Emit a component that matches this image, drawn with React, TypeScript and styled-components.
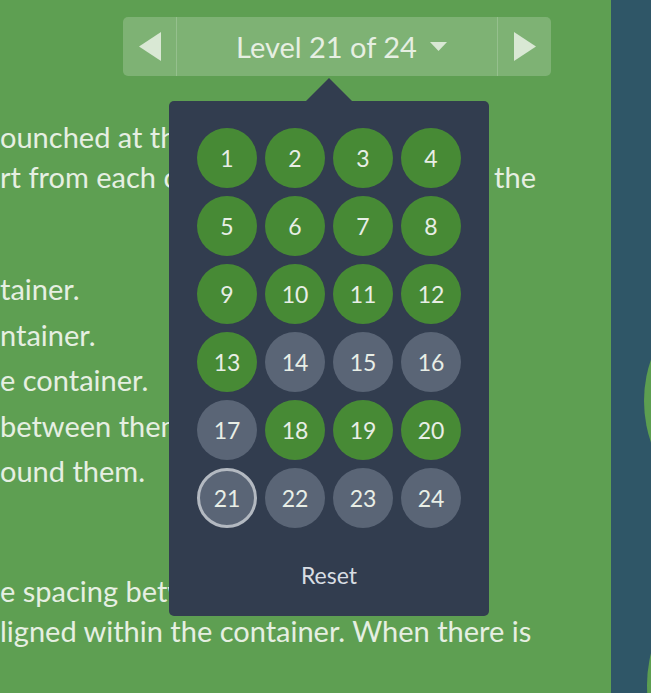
import styled, { createGlobalStyle, css } from "styled-components";

const GlobalStyle = createGlobalStyle`
  html, body {
    margin: 0;
    padding: 0;
    overflow: hidden;
  }
  body {
    font-family: Lato, "Open Sans", sans-serif;
    background: #5e9f52;
  }
`;

const Page = styled.div`
  display: flex;
  width: 651px;
  height: 693px;
  overflow: hidden;
`;

const Instructions = styled.div`
  width: 611px;
  flex-shrink: 0;
  background: #5e9f52;
  color: #e6efe2;
  overflow: hidden;
`;

const LevelBar = styled.div`
  position: relative;
  margin: 17px 0 0 123px;
  width: 428px;
`;

const NavBox = styled.div`
  display: flex;
  height: 59px;
  border-radius: 5px;
  background: rgba(255, 255, 255, 0.2);
`;

const ArrowButton = styled.div<{ $side: "left" | "right" }>`
  width: 53px;
  display: flex;
  align-items: center;
  justify-content: center;
  ${(p) =>
    p.$side === "left"
      ? css`border-right: 1px solid rgba(255, 255, 255, 0.18);`
      : css`border-left: 1px solid rgba(255, 255, 255, 0.18);`}
`;

const LevelLabel = styled.div`
  flex: 1;
  display: flex;
  align-items: center;
  justify-content: center;
  gap: 13px;
  font-size: 29px;
  color: #e6efe2;
  padding-left: 9px;
`;

const Dropdown = styled.div`
  position: absolute;
  top: 84px;
  left: 46px;
  width: 320px;
  background: #323d4f;
  border-radius: 5px;
  padding: 27px 28px 24px;
  box-sizing: border-box;
  z-index: 2;

  &::before {
    content: "";
    position: absolute;
    top: -23px;
    left: 50%;
    margin-left: -23px;
    border-left: 23px solid transparent;
    border-right: 23px solid transparent;
    border-bottom: 23px solid #323d4f;
  }
`;

const LevelGrid = styled.div`
  display: grid;
  grid-template-columns: repeat(4, 60px);
  gap: 8px;
`;

const LevelDot = styled.div<{ $solved: boolean; $current: boolean }>`
  width: 60px;
  height: 60px;
  box-sizing: border-box;
  border-radius: 50%;
  display: flex;
  align-items: center;
  justify-content: center;
  font-size: 23px;
  color: #e8eee6;
  background: ${(p) => (p.$solved ? "#478a35" : "#5a6576")};
  border: ${(p) => (p.$current ? "3px solid #b3b9c1" : "none")};
`;

const Reset = styled.div`
  margin-top: 30px;
  line-height: 34px;
  text-align: center;
  font-size: 23px;
  color: #d8dde3;
`;

const Text = styled.div`
  font-size: 29px;
  white-space: nowrap;
`;

const Paragraph = styled.div<{ $top: number }>`
  margin-top: ${(p) => p.$top}px;
  line-height: 40px;
`;

const SplitLine = styled.div`
  display: flex;
  justify-content: space-between;
  width: 536px;
`;

const List = styled.div`
  margin-top: 69px;
  line-height: 45.5px;
`;

const Board = styled.div`
  position: relative;
  flex: 1;
  background: #2f5667;
  overflow: hidden;
`;

const LilyPad = styled.div<{ $left: number; $top: number }>`
  position: absolute;
  left: ${(p) => p.$left}px;
  top: ${(p) => p.$top}px;
  width: 254px;
  height: 254px;
  border-radius: 50%;
  background: #5c9e50;
`;

const solved = new Set([1, 2, 3, 4, 5, 6, 7, 8, 9, 10, 11, 12, 13, 18, 19, 20]);
const levels = Array.from({ length: 24 }, (_, i) => i + 1);

export default function App() {
  return (
    <>
      <GlobalStyle />
      <Page>
        <Instructions>
          <LevelBar>
            <NavBox>
              <ArrowButton $side="left">
                <svg width="22" height="29" viewBox="0 0 22 29">
                  <polygon points="22,0 22,29 0,14.5" fill="#d9e8d4" />
                </svg>
              </ArrowButton>
              <LevelLabel>
                Level 21 of 24
                <svg width="17" height="9" viewBox="0 0 17 9">
                  <polygon points="0,0 17,0 8.5,9" fill="#d9e8d4" />
                </svg>
              </LevelLabel>
              <ArrowButton $side="right">
                <svg width="22" height="29" viewBox="0 0 22 29">
                  <polygon points="0,0 0,29 22,14.5" fill="#d9e8d4" />
                </svg>
              </ArrowButton>
            </NavBox>
            <Dropdown>
              <LevelGrid>
                {levels.map((n) => (
                  <LevelDot key={n} $solved={solved.has(n)} $current={n === 21}>
                    {n}
                  </LevelDot>
                ))}
              </LevelGrid>
              <Reset>Reset</Reset>
            </Dropdown>
          </LevelBar>
          <Text>
            <Paragraph $top={41}>
              <div>ounched at the top of the pond.</div>
              <SplitLine>
                <span>rt from each other.</span>
                <span>the</span>
              </SplitLine>
            </Paragraph>
            <List>
              <div>tainer.</div>
              <div>ntainer.</div>
              <div>e container.</div>
              <div>between them.</div>
              <div>ound them.</div>
            </List>
            <Paragraph $top={77}>
              <div>e spacing between lines, while</div>
              <div>ligned within the container. When there is</div>
            </Paragraph>
          </Text>
        </Instructions>
        <Board>
          <LilyPad $left={33} $top={274} />
          <LilyPad $left={36} $top={558} />
        </Board>
      </Page>
    </>
  );
}
